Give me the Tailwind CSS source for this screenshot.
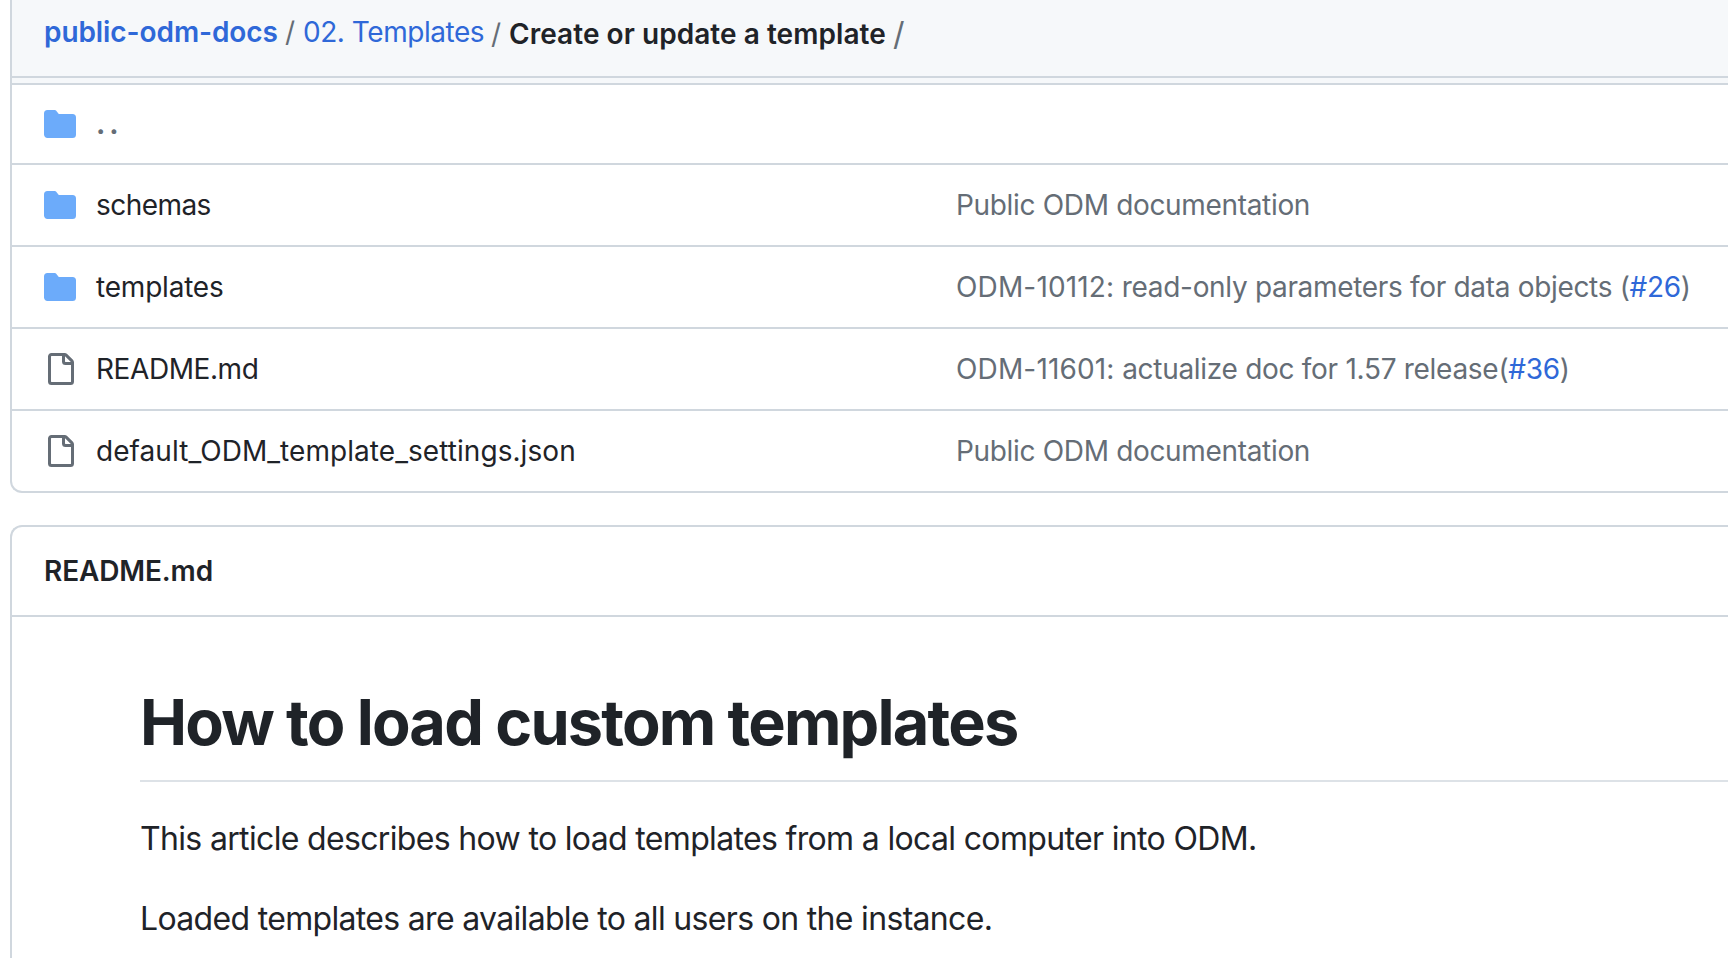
<!DOCTYPE html>
<html lang="en">
<head>
<meta charset="utf-8">
<title>Create or update a template</title>
<script src="https://cdn.jsdelivr.net/npm/@tailwindcss/browser@4"></script>
</head>
<body class="h-[958px] overflow-hidden bg-white font-['Inter',sans-serif] text-[28px] leading-[34px] text-[#1f2328]">
<svg class="hidden">
  <symbol id="dir" viewBox="0 0 16 16"><path d="M1.75 1A1.75 1.75 0 0 0 0 2.75v10.5C0 14.216.784 15 1.75 15h12.5A1.75 1.75 0 0 0 16 13.25v-8.5A1.75 1.75 0 0 0 14.25 3H7.5a.25.25 0 0 1-.2-.1l-.9-1.2C6.07 1.26 5.55 1 5 1H1.75Z"/></symbol>
  <symbol id="file" viewBox="0 0 16 16"><path d="M2 1.75C2 .784 2.784 0 3.75 0h6.586c.464 0 .909.184 1.237.513l2.914 2.914c.329.328.513.773.513 1.237v9.586A1.75 1.75 0 0 1 13.25 16h-9.5A1.75 1.75 0 0 1 2 14.25Zm1.75-.25a.25.25 0 0 0-.25.25v12.5c0 .138.112.25.25.25h9.5a.25.25 0 0 0 .25-.25V6h-2.75A1.75 1.75 0 0 1 9 4.25V1.5Zm6.75.062V4.25c0 .138.112.25.25.25h2.688l-.011-.013-2.914-2.914-.013-.011Z"/></symbol>
</svg>
<div class="ml-[10px] flex h-full flex-col whitespace-nowrap">
  <section class="shrink-0 overflow-hidden rounded-bl-xl border-b-2 border-l-2 border-[#d0d7de]">
    <nav class="flex h-[78px] items-start border-b-2 border-[#d0d7de] bg-[#f6f8fa] pl-8 pt-[15px] text-[#656d76]">
      <a class="w-[241px] font-semibold tracking-[-0.08px] text-[#2f68d8]">public-odm-docs</a>
      <span class="w-[18px]">/</span>
      <a class="w-[188px] tracking-[-0.46px] text-[#2f68d8]">02. Templates</a>
      <span class="mt-[2px] w-[18px]">/</span>
      <strong class="mt-[2px] w-[384px] font-semibold tracking-[0.05px] text-[#1f2328]">Create or update a template</strong>
      <span class="mt-[2px] text-[32px]">/</span>
    </nav>
    <div class="h-[5px] bg-[#f6f8fa]"></div>
    <div class="flex h-20 items-center border-t-2 border-[#d0d7de] pl-8">
      <svg class="mr-5 size-8 fill-[#6cabfa]"><use href="#dir"/></svg>
      <span class="font-bold tracking-[4px] text-[#656d76]">..</span>
    </div>
    <div class="flex h-[82px] items-center border-t-2 border-[#d0d7de] pl-8">
      <svg class="mr-5 size-8 fill-[#6cabfa]"><use href="#dir"/></svg>
      <span class="w-[860px] tracking-[-0.56px]">schemas</span>
      <span class="tracking-[-0.33px] text-[#656d76]">Public ODM documentation</span>
    </div>
    <div class="flex h-[82px] items-center border-t-2 border-[#d0d7de] pl-8">
      <svg class="mr-5 size-8 fill-[#6cabfa]"><use href="#dir"/></svg>
      <span class="w-[860px] tracking-[-0.2px]">templates</span>
      <span class="tracking-[-0.32px] text-[#656d76]"><span class="tracking-[0.15px]">ODM-10112:</span> read-only parameters for data objects (<a class="text-[#2f68d8]">#26</a>)</span>
    </div>
    <div class="flex h-[82px] items-center border-t-2 border-[#d0d7de] pl-8">
      <svg class="mr-5 size-8 fill-[#656d76]"><use href="#file"/></svg>
      <span class="w-[860px] tracking-[-0.42px]">README.md</span>
      <span class="tracking-[-0.29px] text-[#656d76]"><span class="tracking-[0.15px]">ODM-11601:</span> actualize doc for 1.57 release(<a class="text-[#2f68d8]">#36</a>)</span>
    </div>
    <div class="flex h-[82px] items-center border-t-2 border-[#d0d7de] pl-8">
      <svg class="mr-5 size-8 fill-[#656d76]"><use href="#file"/></svg>
      <span class="w-[860px] tracking-[0.06px]">default_ODM_template_settings.json</span>
      <span class="tracking-[-0.33px] text-[#656d76]">Public ODM documentation</span>
    </div>
  </section>
  <section class="mt-8 grow rounded-tl-xl border-l-2 border-t-2 border-[#d0d7de]">
    <h2 class="flex h-[90px] items-center border-b-2 border-[#d0d7de] pl-8 font-semibold tracking-[-0.13px]">README.md</h2>
    <article class="ml-32 pt-[65px] text-[32px] leading-[48px]">
      <h1 class="h-[100px] border-b-2 border-[#dde2e7] text-[63px] font-bold leading-[80px] tracking-[-1.81px]">How to load custom templates</h1>
      <p class="mt-[33px] tracking-[-0.66px]">This article describes how to load templates from a local computer into ODM.</p>
      <p class="mt-8 tracking-[-0.675px]">Loaded templates are available to all users on the instance.</p>
    </article>
  </section>
</div>
</body>
</html>
